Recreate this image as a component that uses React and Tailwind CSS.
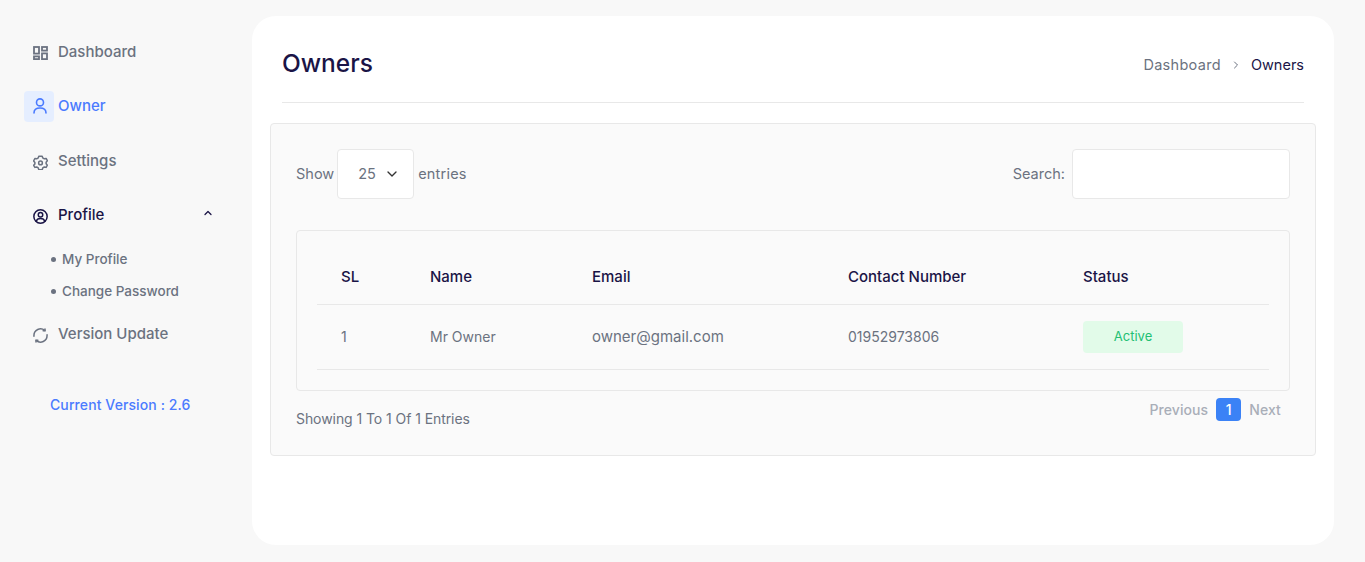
import React from "react";
import { ChevronDown, ChevronUp, ChevronRight } from "lucide-react";

const DashboardIcon = () => (
  <svg width="15" height="14" viewBox="0 0 15 14" fill="none" stroke="currentColor" strokeWidth="1.8">
    <rect x="1" y="1" width="5" height="6.6" />
    <rect x="9" y="1" width="5" height="3.6" />
    <rect x="1" y="10.4" width="5" height="2.7" />
    <rect x="9" y="7.4" width="5" height="5.7" />
  </svg>
);

const UserIcon = () => (
  <svg width="14" height="16" viewBox="0 0 14 16" fill="none" stroke="currentColor" strokeWidth="1.6" strokeLinecap="round">
    <circle cx="7" cy="4.4" r="3.5" />
    <path d="M1 15c0-3.3 2.7-5 6-5s6 1.7 6 5" />
  </svg>
);

const GearIcon = () => (
  <svg width="15" height="15" viewBox="0 0 16 16" fill="none" stroke="currentColor" strokeWidth="1.6" strokeLinejoin="round">
    <path d="M6.2 1.2h3.6l.6 1.9 1.7 1 1.9-.4 1.3 2.4-1.3 1.6v1.6l1.3 1.5-1.3 2.4-1.9-.4-1.7 1-.6 1.9H6.2l-.6-1.9-1.7-1-1.9.4L.7 11l1.3-1.5V7.9L.7 6.3 2 3.7l1.9.4 1.7-1z" />
    <circle cx="8" cy="8.4" r="2" />
  </svg>
);

const ProfileIcon = () => (
  <svg width="15" height="15" viewBox="0 0 16 16" fill="none" stroke="currentColor" strokeWidth="1.6" strokeLinecap="round">
    <circle cx="8" cy="8" r="7.1" />
    <circle cx="8" cy="6.2" r="2.4" />
    <path d="M3.4 13.2c.6-2.1 2.4-3 4.6-3s4 .9 4.6 3" />
  </svg>
);

const RefreshIcon = () => (
  <svg width="15" height="15" viewBox="0 0 16 16" fill="none" stroke="currentColor" strokeWidth="1.6" strokeLinecap="round">
    <path d="M1 8.8V8a7 7 0 0 1 11.5-5.4" />
    <path d="M15 7.2V8a7 7 0 0 1-11.5 5.4" />
    <path d="M12.8 1v2h-2M3.2 15v-2h2" />
  </svg>
);

const NavRow = ({ icon, label, className = "" }) => (
  <div className={`flex h-8 items-center ${className}`}>
    <span className="flex h-8 w-[31px] items-center justify-center pl-px pt-[2px]">{icon}</span>
    <span className="ml-[3px] text-[15px] font-medium">{label}</span>
  </div>
);

const columns = ["SL", "Name", "Email", "Contact Number", "Status"];
const columnWidths = ["w-[89px]", "w-[162px]", "w-[256px]", "w-[235px]", "w-[210px]"];

export default function App() {
  return (
    <div className="flex h-[562px] w-full overflow-hidden bg-[#f8f8f8] font-['Inter',sans-serif] text-[#6b7280]">
      {/* Sidebar */}
      <aside className="w-[252px] shrink-0 pl-6 pt-9">
        <NavRow icon={<DashboardIcon />} label="Dashboard" />
        <div className="mt-[22px] flex h-8 items-center text-[#4b7bff]">
          <span className="flex h-[31px] w-[30px] items-center justify-center rounded bg-[#e5eeff] pl-px">
            <UserIcon />
          </span>
          <span className="ml-1 text-[15px] font-medium">Owner</span>
        </div>
        <NavRow icon={<GearIcon />} label="Settings" className="mt-[23px]" />
        <div className="mt-[22px] flex h-8 w-[190px] items-center justify-between text-[#1a1446]">
          <div className="flex items-center">
            <span className="flex h-8 w-[31px] items-center justify-center pl-px pt-[2px]">
              <ProfileIcon />
            </span>
            <span className="ml-[3px] text-[15px] font-medium">Profile</span>
          </div>
          <ChevronUp size={12} strokeWidth={2.5} className="mb-1" />
        </div>
        <ul className="mt-[12px] pl-[27px] text-[13.5px] font-medium">
          <li className="flex h-8 items-center gap-[6px]">
            <span className="h-[5px] w-[5px] rounded-full bg-[#6b7280]" />
            My Profile
          </li>
          <li className="flex h-8 items-center gap-[6px]">
            <span className="h-[5px] w-[5px] rounded-full bg-[#6b7280]" />
            Change Password
          </li>
        </ul>
        <NavRow icon={<RefreshIcon />} label="Version Update" className="mt-[11px]" />
        <p className="mt-[44px] pl-[26px] text-[14px] font-medium tracking-[0.1px] text-[#4b7bff]">Current Version : 2.6</p>
      </aside>

      {/* Main */}
      <main className="mt-4 h-[529px] w-[1082px] shrink-0 rounded-3xl bg-white px-[18px]">
        <div className="mx-3 flex h-[87px] items-center justify-between border-b border-[#e8e8e8] pt-[8px]">
          <h1 className="text-[24.5px] font-medium text-[#1a1446]">Owners</h1>
          <div className="flex items-center pt-[3px] text-[14.5px]">
            <span className="tracking-[0.3px]">Dashboard</span>
            <ChevronRight size={12} className="mx-[9px]" />
            <span className="text-[#1a1446]">Owners</span>
          </div>
        </div>

        <section className="mt-5 h-[333px] rounded border border-[#e8e8e8] bg-[#fafafa] px-[25px] pt-[25px]">
          <div className="flex items-center justify-between text-[14.5px]">
            <div className="flex items-center">
              <span>Show</span>
              <div className="ml-[3px] flex h-[50px] w-[77px] items-center justify-between rounded border border-[#e8e8e8] bg-white pl-[20px] pr-[13px]">
                <span>25</span>
                <ChevronDown size={16} strokeWidth={2} className="text-[#333333]" />
              </div>
              <span className="ml-1 tracking-[0.2px]">entries</span>
            </div>
            <div className="flex items-center">
              <span>Search:</span>
              <div className="ml-[7px] h-[50px] w-[218px] rounded border border-[#e8e8e8] bg-white" />
            </div>
          </div>

          <div className="mt-[31px] h-[161px] rounded border border-[#e8e8e8] px-5 pt-[19px]">
            <table className="w-full table-fixed border-collapse text-left text-[14px]">
              <thead>
                <tr className="h-[54px] border-b border-[#e8e8e8] text-[15px] text-[#1a1446]">
                  {columns.map((c, i) => (
                    <th key={c} className={`pl-6 font-medium ${columnWidths[i]}`}>
                      {c}
                    </th>
                  ))}
                </tr>
              </thead>
              <tbody>
                <tr className="h-[65px] border-b border-[#e8e8e8]">
                  <td className="pl-6">1</td>
                  <td className="pl-6">Mr Owner</td>
                  <td className="pl-6 pt-px text-[15px]">owner@gmail.com</td>
                  <td className="pl-6">01952973806</td>
                  <td className="pl-6">
                    <span className="flex h-8 w-[100px] items-center justify-center rounded bg-[#e2fbe9] text-[13px] text-[#22c074]">
                      Active
                    </span>
                  </td>
                </tr>
              </tbody>
            </table>
          </div>

          <div className="flex items-start justify-between">
            <p className="mt-[17px] text-[14px] tracking-[-0.07px]">Showing 1 To 1 Of 1 Entries</p>
            <div className="mt-[7px] flex h-[23px] items-center pr-[9px] text-[14px] font-medium tracking-[0.1px] text-[#a9aeb8]">
              <span>Previous</span>
              <span className="mx-2 flex h-[23px] w-[25px] items-center justify-center rounded bg-[#3b82f6] text-white">1</span>
              <span>Next</span>
            </div>
          </div>
        </section>
      </main>
    </div>
  );
}
